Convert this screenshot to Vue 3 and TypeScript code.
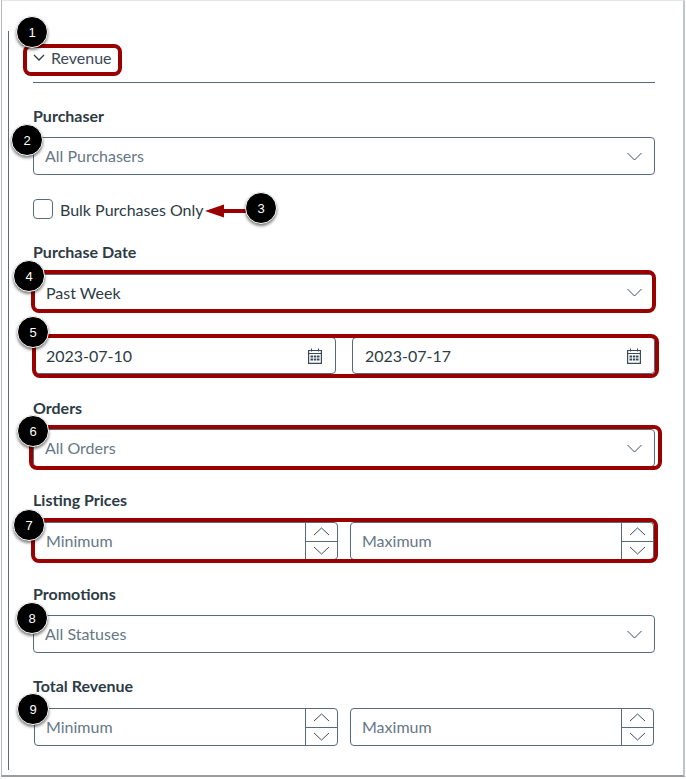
<script setup lang="ts">
const chevronDown = "M.5 1l7 7 7-7";
</script>

<template>
  <div class="page">
    <div class="frame">
      <div class="rail">
        <section class="head">
          <div class="toggle">
            <svg class="toggle-icon" width="12" height="8" viewBox="0 0 12 8" aria-hidden="true">
              <path d="M1 1l5 5 5-5" fill="none" stroke="#2d3b45" stroke-width="1.3" />
            </svg>
            <span>Revenue</span>
            <i class="hl hl-toggle"></i>
            <b class="badge b1">1</b>
          </div>
        </section>

        <section class="field f-purchaser">
          <label class="label">Purchaser</label>
          <div class="box select ph">
            All Purchasers
            <svg class="chev" width="15" height="9" viewBox="0 0 15 9" aria-hidden="true"><path :d="chevronDown" fill="none" stroke="#3f4e5a" /></svg>
            <b class="badge b2">2</b>
          </div>
        </section>

        <section class="check">
          <span class="checkbox"></span>
          <span class="check-text">Bulk Purchases Only</span>
          <svg class="arrow" width="44" height="16" viewBox="0 0 44 16" aria-hidden="true">
            <path d="M0 8l19-6.500v4.500h25v4H19v4.500z" fill="#990000" />
          </svg>
          <b class="badge b3">3</b>
        </section>

        <section class="field f-date">
          <label class="label">Purchase Date</label>
          <div class="box select value">
            Past Week
            <svg class="chev" width="15" height="9" viewBox="0 0 15 9" aria-hidden="true"><path :d="chevronDown" fill="none" stroke="#3f4e5a" /></svg>
            <i class="hl hl-date"></i>
            <b class="badge b4">4</b>
          </div>
          <div class="dates">
            <div class="box date value">
              2023-07-10
              <svg class="cal" width="14" height="16" viewBox="0 0 14 16" aria-hidden="true">
                <path d="M.6 2.500h12.800v12.900H.6z M.6 5.500h12.800" fill="none" stroke="#394b58" stroke-width="1.200" />
                <path d="M3.500.5v3M10.500.5v3" stroke="#394b58" />
                <path d="M2.500 7.500h2.500v2H2.500zM5.800 7.500h2.500v2H5.800zM9 7.500h2.500v2H9zM2.500 10.500h2.500v2H2.500zM5.800 10.500h2.500v2H5.800zM9 10.500h2.500v2H9z" fill="#394b58" />
              </svg>
            </div>
            <div class="box date value">
              2023-07-17
              <svg class="cal" width="14" height="16" viewBox="0 0 14 16" aria-hidden="true">
                <path d="M.6 2.500h12.800v12.900H.6z M.6 5.500h12.800" fill="none" stroke="#394b58" stroke-width="1.200" />
                <path d="M3.500.5v3M10.500.5v3" stroke="#394b58" />
                <path d="M2.500 7.500h2.500v2H2.500zM5.800 7.500h2.500v2H5.800zM9 7.500h2.500v2H9zM2.500 10.500h2.500v2H2.500zM5.800 10.500h2.500v2H5.800zM9 10.500h2.500v2H9z" fill="#394b58" />
              </svg>
            </div>
            <i class="hl hl-dates"></i>
            <b class="badge b5">5</b>
          </div>
        </section>

        <section class="field f-orders">
          <label class="label">Orders</label>
          <div class="box select ph">
            All Orders
            <svg class="chev" width="15" height="9" viewBox="0 0 15 9" aria-hidden="true"><path :d="chevronDown" fill="none" stroke="#3f4e5a" /></svg>
            <i class="hl hl-orders"></i>
            <b class="badge b6">6</b>
          </div>
        </section>

        <section class="field f-listing">
          <label class="label">Listing Prices</label>
          <div class="range">
            <div class="box num ph">
              <span class="num-text">Minimum</span>
              <span class="stepper">
                <span class="step"><svg width="17" height="9" viewBox="0 0 17 9" aria-hidden="true"><path d="M1 8l7.500-7L16 8" fill="none" stroke="#3f4e5a" /></svg></span>
                <span class="step"><svg width="17" height="9" viewBox="0 0 17 9" aria-hidden="true"><path d="M1 1l7.500 7L16 1" fill="none" stroke="#3f4e5a" /></svg></span>
              </span>
            </div>
            <div class="box num ph">
              <span class="num-text">Maximum</span>
              <span class="stepper">
                <span class="step"><svg width="17" height="9" viewBox="0 0 17 9" aria-hidden="true"><path d="M1 8l7.500-7L16 8" fill="none" stroke="#3f4e5a" /></svg></span>
                <span class="step"><svg width="17" height="9" viewBox="0 0 17 9" aria-hidden="true"><path d="M1 1l7.500 7L16 1" fill="none" stroke="#3f4e5a" /></svg></span>
              </span>
            </div>
            <i class="hl hl-range"></i>
            <b class="badge b7">7</b>
          </div>
        </section>

        <section class="field f-promo">
          <label class="label">Promotions</label>
          <div class="box select ph">
            All Statuses
            <svg class="chev" width="15" height="9" viewBox="0 0 15 9" aria-hidden="true"><path :d="chevronDown" fill="none" stroke="#3f4e5a" /></svg>
            <b class="badge b8">8</b>
          </div>
        </section>

        <section class="field f-total">
          <label class="label">Total Revenue</label>
          <div class="range">
            <div class="box num ph">
              <span class="num-text">Minimum</span>
              <span class="stepper">
                <span class="step"><svg width="17" height="9" viewBox="0 0 17 9" aria-hidden="true"><path d="M1 8l7.500-7L16 8" fill="none" stroke="#3f4e5a" /></svg></span>
                <span class="step"><svg width="17" height="9" viewBox="0 0 17 9" aria-hidden="true"><path d="M1 1l7.500 7L16 1" fill="none" stroke="#3f4e5a" /></svg></span>
              </span>
            </div>
            <div class="box num ph">
              <span class="num-text">Maximum</span>
              <span class="stepper">
                <span class="step"><svg width="17" height="9" viewBox="0 0 17 9" aria-hidden="true"><path d="M1 8l7.500-7L16 8" fill="none" stroke="#3f4e5a" /></svg></span>
                <span class="step"><svg width="17" height="9" viewBox="0 0 17 9" aria-hidden="true"><path d="M1 1l7.500 7L16 1" fill="none" stroke="#3f4e5a" /></svg></span>
              </span>
            </div>
            <b class="badge b9">9</b>
          </div>
        </section>
      </div>
    </div>
  </div>
</template>

<style>
html,
body {
  margin: 0;
  background: #fff;
}
</style>

<style scoped>
.page {
  width: 686px;
  height: 779px;
  overflow: hidden;
  box-sizing: border-box;
  font-family: Lato, "Open Sans", sans-serif;
  color: #2d3b45;
  font-size: 16px;
}
.frame {
  box-sizing: border-box;
  width: 684px;
  height: 777px;
  margin-left: 1px;
  padding: 30px 0 5px 6px;
  background: #fff;
  border-top: 1px solid #e4e6e7;
  border-left: 1px solid #b4b8ba;
  border-right: 2px solid #c2c5c7;
  border-bottom: 2px solid #9a9d9f;
}
.rail {
  box-sizing: border-box;
  height: 100%;
  padding-left: 24px;
  width: 648px;
  border-left: 1px solid #5c6b77;
}
.head {
  height: 52px;
  border-bottom: 1px solid #5a6b78;
  box-sizing: border-box;
  width: 622px;
  position: relative;
}
.toggle {
  display: flex;
  align-items: center;
  gap: 6px;
  position: absolute;
  top: 17px;
  left: 0;
  line-height: 20px;
  color: #3a4a56;
}
.toggle-icon { flex: none; }
.label {
  display: block;
  font-weight: 700;
  line-height: 20px;
  height: 20px;
  color: #2d3b45;
}
.box {
  position: relative;
  box-sizing: border-box;
  height: 38px;
  border: 1px solid #5a6b78;
  border-radius: 4px;
  display: flex;
  align-items: center;
  background: #fff;
  line-height: 20px;
}
.select {
  width: 622px;
  padding-left: 11px;
  justify-content: space-between;
  padding-right: 12px;
}
.ph { color: #667785; }
.value { color: #2d3b45; }
.f-purchaser { margin-top: 23px; }
.f-purchaser .label { margin-bottom: 11px; }
.check {
  position: relative;
  display: flex;
  align-items: center;
  gap: 7px;
  height: 20px;
  margin-top: 24px;
}
.checkbox {
  box-sizing: border-box;
  width: 20px;
  height: 20px;
  border: 1px solid #5a6b78;
  border-radius: 4px;
}
.check-text { color: #2d3b45; }
.arrow {
  position: absolute;
  left: 172px;
  top: 4px;
}
.f-date { margin-top: 23px; }
.f-date .label { margin-bottom: 12px; }
.f-date > .select { height: 37px; padding-left: 12px; }
.dates,
.range {
  position: relative;
  display: flex;
  justify-content: space-between;
}
.dates {
  margin-top: 26px;
  margin-left: 2px;
  width: 620px;
}
.date {
  height: 37px;
  padding: 0 13px 0 10px;
  justify-content: space-between;
}
.date:first-child { width: 301px; }
.date:nth-child(2) { width: 303px; padding-left: 12px; }
.f-orders { margin-top: 24px; }
.f-orders .label { margin-bottom: 11px; }
.f-listing { margin-top: 23px; }
.f-listing .label { margin-bottom: 12px; }
.f-promo { margin-top: 24px; }
.f-promo .label { margin-bottom: 11px; }
.f-total { margin-top: 23px; }
.f-total .label { margin-bottom: 12px; }
.range {
  margin-left: 1px;
  width: 620px;
}
.num {
  width: 304px;
  height: 38px;
  padding-left: 11px;
}
.num-text { flex: 1; }
.stepper {
  box-sizing: border-box;
  width: 32px;
  height: 100%;
  border-left: 1px solid #5a6b78;
  display: flex;
  flex-direction: column;
  flex: none;
}
.step {
  flex: 1;
  display: flex;
  align-items: center;
  justify-content: center;
}
.step:first-child { border-bottom: 1px solid #5a6b78; }
.hl {
  position: absolute;
  box-sizing: border-box;
  border: 4px solid #990000;
  border-radius: 8px;
  pointer-events: none;
}
.hl-toggle { left: -10px; top: -4px; width: 99px; height: 32px; }
.hl-date { left: -3px; top: -5px; width: 625px; height: 43px; }
.hl-dates { left: -3px; top: -3px; width: 627px; height: 44px; }
.hl-orders { left: -5px; top: -5px; width: 633px; height: 45px; }
.hl-range { left: -3px; top: -4px; width: 627px; height: 45px; }
.badge {
  position: absolute;
  box-sizing: border-box;
  width: 32px;
  height: 32px;
  border-radius: 50%;
  background: #000;
  color: #fff;
  border: 1px solid #fff;
  box-shadow: 0 2px 3px rgba(0, 0, 0, 0.5);
  display: flex;
  align-items: center;
  justify-content: center;
  font: 400 13px "Liberation Sans", Arial, sans-serif;
  z-index: 2;
}
.b1 { left: -17px; top: -32px; }
.b2 { left: -23px; top: -14px; }
.b3 { left: 212px; top: -7px; }
.b4 { left: -21px; top: -15px; }
.b5 { left: -18px; top: -21px; }
.b6 { left: -17px; top: -15px; }
.b7 { left: -21px; top: -13px; }
.b8 { left: -18px; top: -14px; }
.b9 { left: -17px; top: -15px; }
</style>
